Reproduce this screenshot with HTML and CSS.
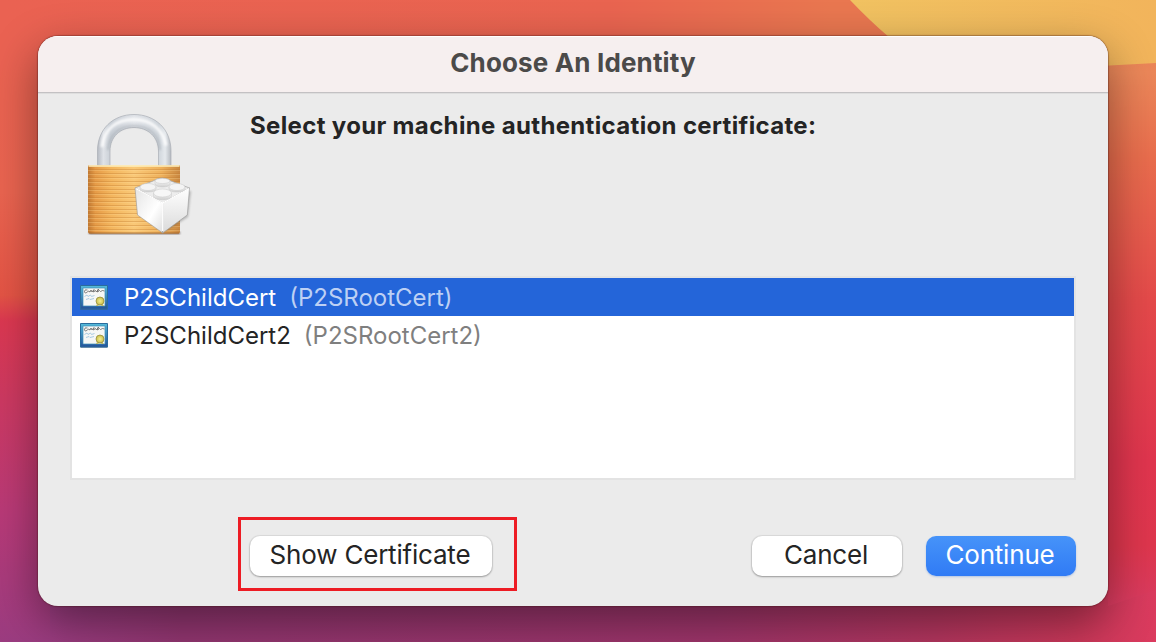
FILE: index.html
```html
<!DOCTYPE html>
<html lang="en">
<head>
<meta charset="utf-8">
<title>Choose An Identity</title>
<link rel="stylesheet" href="styles.css">
</head>
<body>
<svg class="wallpaper" viewBox="0 0 1156 642" preserveAspectRatio="none" aria-hidden="true">
  <defs>
    <linearGradient id="left" x1="0" y1="0" x2="0" y2="1">
      <stop offset="0" stop-color="#ea6252"/><stop offset=".3" stop-color="#ea6450"/><stop offset=".46" stop-color="#e45445"/><stop offset=".5" stop-color="#dc3851"/><stop offset=".62" stop-color="#cd3961"/><stop offset=".8" stop-color="#b93a78"/><stop offset="1" stop-color="#9b3c80"/>
    </linearGradient>
    <linearGradient id="right" x1="0" y1="0" x2="0" y2="1">
      <stop offset="0" stop-color="#e9784f"/><stop offset=".12" stop-color="#eb8759"/><stop offset=".26" stop-color="#e96d4d"/><stop offset=".5" stop-color="#e4494a"/><stop offset=".76" stop-color="#e0354e"/><stop offset=".9" stop-color="#de364d"/><stop offset="1" stop-color="#d93b60"/>
    </linearGradient>
    <linearGradient id="bottom"><stop offset="0" stop-color="#9b3c80"/><stop offset=".12" stop-color="#933671"/><stop offset=".6" stop-color="#a0356b"/><stop offset=".8" stop-color="#b5365f"/><stop offset=".93" stop-color="#cc385a"/><stop offset="1" stop-color="#db3b5e"/></linearGradient>
    <linearGradient id="top"><stop offset="0" stop-color="#ea6252"/><stop offset=".55" stop-color="#e96450"/><stop offset=".75" stop-color="#e97750"/></linearGradient>
    <linearGradient id="gold"><stop offset="0" stop-color="#f1c261"/><stop offset="1" stop-color="#f2b45b"/></linearGradient>
  </defs>
  <path fill="url(#left)" d="M0 0H578V642H0z"/>
  <path fill="url(#top)" d="M0 0H1108V70H0z"/>
  <path fill="url(#bottom)" d="M50 590H1156V642H50z"/>
  <path fill="url(#right)" d="M1108 0H1156V590L1108 606z"/>
  <path fill="url(#gold)" d="M850 0Q870 21 890 38V66H1100L1156 63V0z"/>
</svg>
<main class="window">
  <header class="titlebar"><h1 class="title">Choose An Identity</h1></header>
  <section class="intro">
    <svg class="lock" viewBox="80 108 116 132" aria-hidden="true">
      <defs>
        <linearGradient id="steel"><stop offset="0" stop-color="#b5bac2"/><stop offset=".08" stop-color="#dfe2e7"/><stop offset=".18" stop-color="#c8ced5"/><stop offset=".5" stop-color="#e0e3e8"/><stop offset=".83" stop-color="#cfd5db"/><stop offset=".92" stop-color="#e5e9ed"/><stop offset="1" stop-color="#b5bac0"/></linearGradient>
        <linearGradient id="brass"><stop offset="0" stop-color="#c07832"/><stop offset=".08" stop-color="#e69b47"/><stop offset=".25" stop-color="#f3b55d"/><stop offset=".5" stop-color="#fac978"/><stop offset=".8" stop-color="#eeb05b"/><stop offset="1" stop-color="#c88640"/></linearGradient>
        <linearGradient id="faceL" x2="1" y2="1"><stop offset="0" stop-color="#e4e4e4"/><stop offset=".6" stop-color="#fff"/><stop offset="1" stop-color="#dedede"/></linearGradient>
        <linearGradient id="faceR" x1=".5" y1="0" x2=".5" y2="1"><stop offset="0" stop-color="#fff"/><stop offset="1" stop-color="#dadada"/></linearGradient>
        <linearGradient id="stud" x2="0" y2="1"><stop offset="0" stop-color="#f9f9f9"/><stop offset="1" stop-color="#cfcfcf"/></linearGradient>
        <pattern id="ridges" width="8" height="4" patternUnits="userSpaceOnUse"><path d="M0 1.500H8" stroke="#c17a2f" stroke-opacity=".36"/><path d="M0 2.500H8" stroke="#ffe0a0" stroke-opacity=".25"/></pattern>
        <filter id="soft" x="-20%" y="-20%" width="140%" height="140%"><feGaussianBlur stdDeviation="1.3"/></filter>
      </defs>
      <path d="M97.500 166V151C97.500 129 113 114.500 134 114.500s37 14.500 37 36.500v15h-12.500v-15c0-14-10.500-23.500-24.500-23.500s-24 9.500-24 23.500v15z" fill="url(#steel)" stroke="#a9aeb5" stroke-width=".7"/>
      <path d="M102 147C104 129 116 119.500 134 119.500c17 0 29 10 32 26" fill="none" stroke="#fff" stroke-width="3.500" opacity=".8" filter="url(#soft)"/>
      <path d="M108 150c1-15 11-24 26-24s25 9 26 24" fill="none" stroke="#969da5" stroke-width="2" opacity=".5" filter="url(#soft)"/>
      <path d="M89 232H180V234H89z" fill="#655" filter="url(#soft)"/>
      <path d="M88 165.500H180V232q0 1.500-2 1.500H90q-2 0-2-1.500z" fill="url(#brass)"/>
      <path d="M88 168H180V233H88z" fill="url(#ridges)"/>
      <path d="M88.500 166H179.500" stroke="#fff0bd" stroke-width="1.500"/>
      <path d="M89 233H179" stroke="#9e6124" stroke-width=".8"/>
      <path d="M140 191L191 191 188 217 165 232z" fill="#555" opacity=".35" filter="url(#soft)"/>
      <path d="M135 188L153 181Q162 175 171 181L189.500 188 162.700 203z" fill="#ededed" stroke="#aaa" stroke-width=".8"/>
      <path d="M135 188L162.700 203V233L137.500 215z" fill="url(#faceL)" stroke="#999" stroke-width=".6"/>
      <path d="M189.500 188L162.700 203V233L187.300 215z" fill="url(#faceR)" stroke="#999" stroke-width=".6"/>
      <path d="M162.700 203V231" stroke="#fff" stroke-width="1.300"/>
      <path d="M135.700 188.500L162.700 203 189 188.500" fill="none" stroke="#fff" stroke-width="1.300"/>
      <g fill="url(#stud)" stroke="#c8c8c8" stroke-width=".5">
        <path d="M155 181v3c0 4 15 4 15 0v-3z"/><ellipse cx="162.500" cy="181" rx="7.500" ry="2.500" fill="#f4f4f4"/>
        <path d="M140 187v2c0 4 16 4 16 0v-2z"/><ellipse cx="148" cy="187" rx="8" ry="3.500" fill="#f4f4f4"/>
        <path d="M169 187v2c0 4 16 4 16 0v-2z"/><ellipse cx="177" cy="187" rx="8" ry="3.500" fill="#f4f4f4"/>
        <path d="M153.500 193v3c0 5 18 5 18 0v-3z"/><ellipse cx="162.500" cy="193" rx="9" ry="4" fill="#f7f7f7"/>
      </g>
    </svg>
    <h2 class="prompt">Select your machine authentication certificate:</h2>
  </section>
  <svg class="symbols" aria-hidden="true">
    <defs>
      <linearGradient id="frame" x2="0" y2="1"><stop offset="0" stop-color="#55bbda"/><stop offset="1" stop-color="#245199"/></linearGradient>
      <radialGradient id="seal"><stop offset="0" stop-color="#f3ed91"/><stop offset="1" stop-color="#c9bd45"/></radialGradient>
      <symbol id="certificate" viewBox="0 0 28 26">
        <path d="M.5 24.500h27" stroke="#4c5871" opacity=".5"/>
        <path d="M.5.500h27v23.500H.500z" fill="url(#frame)" stroke="#2a6c9d"/>
        <path d="M3 3h22v18H3z" fill="#f6f7f5" stroke="#3d91b9" stroke-width=".7"/>
        <path d="M7.500 5q-3-1-3 1.500t3 .5l1-1 1.500 1 1-2 1 2 2-2.500-.5 2.500 2-1.500 1 1.500 2-3-1 3 2-1.500 1 1 2-1 2 .5" fill="none" stroke="#555" stroke-width=".75"/>
        <path d="M4.500 11.500l2.500-1.500 1 1.500 2.500-1.500 1 1.500 3-1M6 14.500l3-1 1 1 4-1" fill="none" stroke="#a9cbe2" stroke-width="1"/>
        <path d="M17 19l-1 2h3zM22 19l2 2h-3z" fill="#c6bc5d"/>
        <circle cx="20" cy="16" r="4" fill="url(#seal)" stroke="#8e873b" stroke-width=".7"/>
      </symbol>
    </defs>
  </svg>
  <div class="list" role="listbox">
    <div class="row selected" role="option" aria-selected="true"><svg class="cert"><use href="#certificate"/></svg><span class="name">P2SChildCert</span><span class="issuer">(P2SRootCert)</span></div>
    <div class="row" role="option"><svg class="cert"><use href="#certificate"/></svg><span class="name">P2SChildCert2</span><span class="issuer">(P2SRootCert2)</span></div>
  </div>
  <footer class="actions">
    <div class="highlight"><button class="button show">Show Certificate</button></div>
    <button class="button cancel">Cancel</button>
    <button class="button continue">Continue</button>
  </footer>
</main>
</body>
</html>
```

FILE: styles.css
```css
* { box-sizing: border-box; }
body {
  margin: 0;
  width: 1156px;
  height: 642px;
  padding: 36px 48px 36px 38px;
  overflow: hidden;
  font-family: Inter, sans-serif;
  color: #242424;
}
.wallpaper { position: absolute; inset: 0; z-index: -1; width: 1156px; height: 642px; }
.symbols { position: absolute; width: 0; height: 0; }
.window {
  width: 1070px;
  height: 570px;
  display: flex;
  flex-direction: column;
  border-radius: 20px;
  overflow: hidden;
  background: #ebebeb;
  box-shadow: 0 0 1px 1px rgba(70, 20, 20, .35), 0 16px 46px rgba(0, 0, 0, .42);
}
.titlebar {
  height: 58px;
  flex: none;
  display: flex;
  justify-content: center;
  background: #f6efef;
  border-bottom: 1px solid #dedede;
  box-shadow: inset 0 1px #fff, inset 0 -1px #c3c1c3;
}
.title { margin: 0; font-size: 26px; line-height: 54px; font-weight: 700; color: #4b4a49; white-space: nowrap; letter-spacing: .15px; }
.intro { height: 182px; flex: none; display: flex; padding: 14px 0 0 42px; gap: 54px; }
.lock { width: 116px; height: 132px; flex: none; }
.prompt { margin: 0; font-size: 24px; line-height: 36px; font-weight: 700; white-space: nowrap; letter-spacing: .34px; }
.list { height: 204px; flex: none; margin: 0 32px; background: #fff; border: 2px solid #e3e3e3; }
.row { height: 38px; display: flex; align-items: center; padding-left: 8px; font-size: 24px; font-weight: 400; letter-spacing: 0; white-space: nowrap; }
.selected { background: #2465d9; color: #fff; }
.cert { width: 28px; height: 26px; margin: 2px 16px 0 0; flex: none; }
.name { margin-right: 13px; }
.issuer { color: #7f7f7f; }
.selected .issuer { color: #bdd0f4; }
.actions { display: flex; align-items: flex-start; padding: 37px 32px 0 200px; }
.highlight { width: 279px; height: 74px; border: 3px solid #ed1c24; padding: 16px 0 0 9px; flex: none; }
.button { display: block; width: 150px; height: 40px; padding: 0 2px 2px 0; border: 0; border-radius: 10px; font: 400 26px/38px Inter, sans-serif; letter-spacing: -.2px; color: #242424; background: #fff; box-shadow: 0 0 1px 1px rgba(0, 0, 0, .07), 0 1px 2px rgba(0, 0, 0, .3); white-space: nowrap; }
.show { width: 242px; }
.cancel { margin: 19px 24px 0 auto; }
.continue { margin-top: 19px; color: #fff; background: linear-gradient(#4693f9, #307bf5); box-shadow: 0 1px 2px rgba(48, 110, 210, .3); }
```
